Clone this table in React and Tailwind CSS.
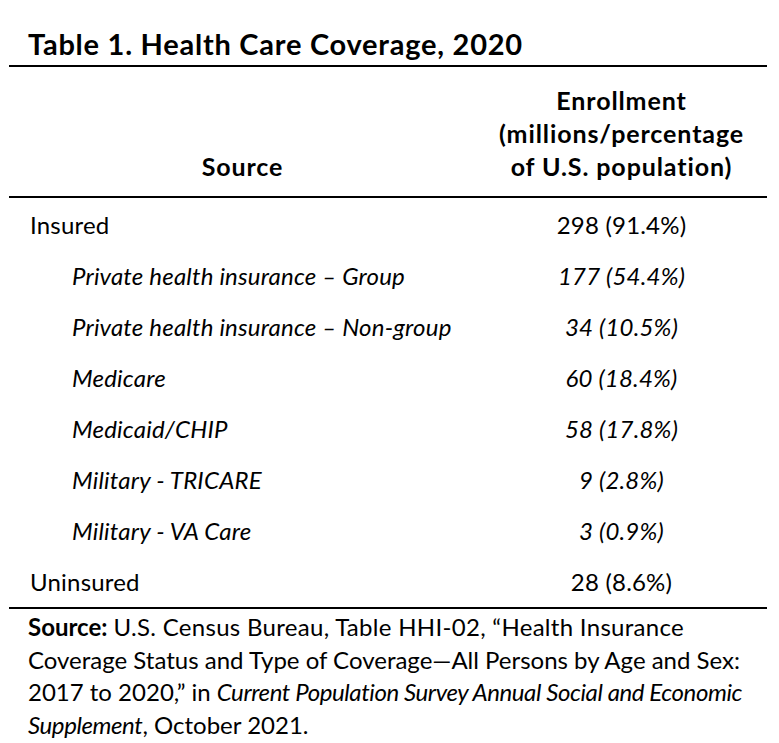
import React from "react";

const rows = [
  { label: "Insured", value: "298 (91.4%)", sub: false },
  { label: "Private health insurance – Group", value: "177 (54.4%)", sub: true },
  { label: "Private health insurance – Non-group", value: "34 (10.5%)", sub: true },
  { label: "Medicare", value: "60 (18.4%)", sub: true },
  { label: "Medicaid/CHIP", value: "58 (17.8%)", sub: true },
  { label: "Military - TRICARE", value: "9 (2.8%)", sub: true },
  { label: "Military - VA Care", value: "3 (0.9%)", sub: true },
  { label: "Uninsured", value: "28 (8.6%)", sub: false },
];

export default function App() {
  return (
    <div className="w-[779px] h-[743px] bg-white text-black font-['Lato',sans-serif] overflow-hidden">
      <div className="ml-[9px] w-[758px]">
        <h1 className="pl-[19px] pt-[28px] pb-[5px] text-[29px] leading-[32px] font-bold tracking-[0.75px] whitespace-nowrap">
          Table 1. Health Care Coverage, 2020
        </h1>
        <div className="h-[2px] bg-black" />
        <div className="grid grid-cols-[467px_1fr] items-end pt-[17px] pb-[13px] text-[25px] leading-[33px] font-bold tracking-[0.9px]">
          <div className="text-center">Source</div>
          <div className="text-center whitespace-nowrap">
            <div>Enrollment</div>
            <div>(millions/percentage</div>
            <div>of U.S. population)</div>
          </div>
        </div>
        <div className="h-[2px] bg-black" />
        <div className="pt-[1px]">
          {rows.map((r) => (
            <div key={r.label} className="grid grid-cols-[467px_1fr] h-[51px] items-center text-[24px] tracking-[0.2px]">
              <div className={r.sub ? "pl-[63px] italic whitespace-nowrap" : "pl-[21px]"}>{r.label}</div>
              <div className={r.sub ? "text-center italic" : "text-center"}>{r.value}</div>
            </div>
          ))}
        </div>
        <div className="h-[2px] bg-black" />
        <div className="pl-[19px] pt-[2px] text-[24px] leading-[32.5px] whitespace-nowrap">
          <span className="font-bold">Source:</span>{" "}
          <span className="tracking-[0.3px]">U.S. Census Bureau, Table HHI-02, “Health Insurance</span>
          <br />
          Coverage Status and Type of Coverage—All Persons by Age and Sex:
          <br />
          2017 to 2020,” in <i className="tracking-[-0.4px]">Current Population Survey Annual Social and Economic</i>
          <br />
          <i className="tracking-[-0.4px]">Supplement</i>, October 2021.
        </div>
      </div>
    </div>
  );
}
